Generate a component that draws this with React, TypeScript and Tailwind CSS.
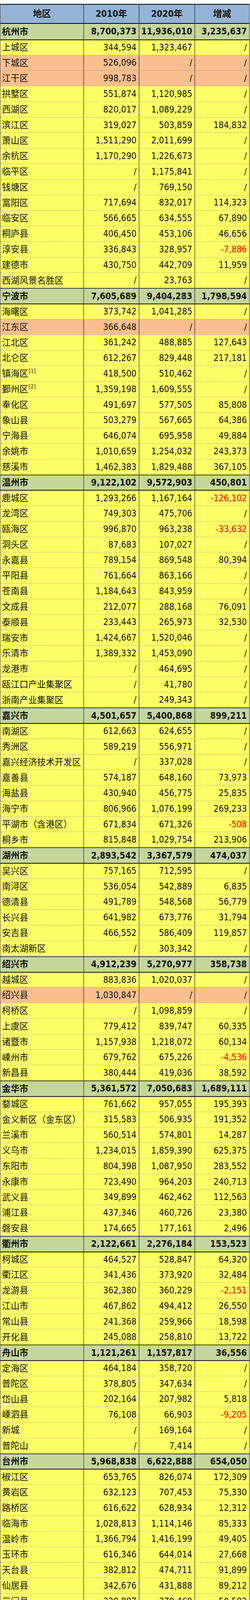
import React from "react";

type Kind = "c" | "n" | "o" | "t";
type Row = [string, Kind, string, string, string, string?];

const rows: Row[] = [
  ["杭州市", "c", "8,700,373", "11,936,010", "3,235,637"],
  ["上城区", "n", "344,594", "1,323,467", "/"],
  ["下城区", "o", "526,096", "/", "/"],
  ["江干区", "o", "998,783", "/", "/"],
  ["拱墅区", "n", "551,874", "1,120,985", "/"],
  ["西湖区", "n", "820,017", "1,089,229", "/"],
  ["滨江区", "n", "319,027", "503,859", "184,832"],
  ["萧山区", "n", "1,511,290", "2,011,699", "/"],
  ["余杭区", "n", "1,170,290", "1,226,673", "/"],
  ["临平区", "n", "/", "1,175,841", "/"],
  ["钱塘区", "n", "/", "769,150", "/"],
  ["富阳区", "n", "717,694", "832,017", "114,323"],
  ["临安区", "n", "566,665", "634,555", "67,890"],
  ["桐庐县", "n", "406,450", "453,106", "46,656"],
  ["淳安县", "n", "336,843", "328,957", "-7,886"],
  ["建德市", "n", "430,750", "442,709", "11,959"],
  ["西湖风景名胜区", "n", "/", "23,763", "/"],
  ["宁波市", "c", "7,605,689", "9,404,283", "1,798,594"],
  ["海曙区", "n", "373,742", "1,041,285", "/"],
  ["江东区", "o", "366,648", "/", "/"],
  ["江北区", "n", "361,242", "488,885", "127,643"],
  ["北仑区", "n", "612,267", "829,448", "217,181"],
  ["镇海区", "n", "418,500", "510,462", "/", "[1]"],
  ["鄞州区", "n", "1,359,198", "1,609,555", "/", "[2]"],
  ["奉化区", "n", "491,697", "577,505", "85,808"],
  ["象山县", "n", "503,279", "567,665", "64,386"],
  ["宁海县", "n", "646,074", "695,958", "49,884"],
  ["余姚市", "n", "1,010,659", "1,254,032", "243,373"],
  ["慈溪市", "n", "1,462,383", "1,829,488", "367,105"],
  ["温州市", "c", "9,122,102", "9,572,903", "450,801"],
  ["鹿城区", "n", "1,293,266", "1,167,164", "-126,102"],
  ["龙湾区", "n", "749,303", "475,706", "/"],
  ["瓯海区", "n", "996,870", "963,238", "-33,632"],
  ["洞头区", "n", "87,683", "107,027", "/"],
  ["永嘉县", "n", "789,154", "869,548", "80,394"],
  ["平阳县", "n", "761,664", "863,166", "/"],
  ["苍南县", "n", "1,184,643", "843,959", "/"],
  ["文成县", "n", "212,077", "288,168", "76,091"],
  ["泰顺县", "n", "233,443", "265,973", "32,530"],
  ["瑞安市", "n", "1,424,667", "1,520,046", "/"],
  ["乐清市", "n", "1,389,332", "1,453,090", "/"],
  ["龙港市", "n", "/", "464,695", "/"],
  ["瓯江口产业集聚区", "n", "/", "41,780", "/"],
  ["浙南产业集聚区", "n", "/", "249,343", "/"],
  ["嘉兴市", "c", "4,501,657", "5,400,868", "899,211"],
  ["南湖区", "n", "612,663", "624,655", "/"],
  ["秀洲区", "n", "589,219", "556,971", "/"],
  ["嘉兴经济技术开发区", "n", "/", "337,028", "/"],
  ["嘉善县", "n", "574,187", "648,160", "73,973"],
  ["海盐县", "n", "430,940", "456,775", "25,835"],
  ["海宁市", "n", "806,966", "1,076,199", "269,233"],
  ["平湖市（含港区）", "n", "671,834", "671,326", "-508"],
  ["桐乡市", "n", "815,848", "1,029,754", "213,906"],
  ["湖州市", "c", "2,893,542", "3,367,579", "474,037"],
  ["吴兴区", "n", "757,165", "712,595", "/"],
  ["南浔区", "n", "536,054", "542,889", "6,835"],
  ["德清县", "n", "491,789", "548,568", "56,779"],
  ["长兴县", "n", "641,982", "673,776", "31,794"],
  ["安吉县", "n", "466,552", "586,409", "119,857"],
  ["南太湖新区", "n", "/", "303,342", "/"],
  ["绍兴市", "c", "4,912,239", "5,270,977", "358,738"],
  ["越城区", "n", "883,836", "1,020,037", "/"],
  ["绍兴县", "o", "1,030,847", "/", "/"],
  ["柯桥区", "n", "/", "1,098,859", "/"],
  ["上虞区", "n", "779,412", "839,747", "60,335"],
  ["诸暨市", "n", "1,157,938", "1,218,072", "60,134"],
  ["嵊州市", "n", "679,762", "675,226", "-4,536"],
  ["新昌县", "n", "380,444", "419,036", "38,592"],
  ["金华市", "c", "5,361,572", "7,050,683", "1,689,111"],
  ["婺城区", "n", "761,662", "957,055", "195,393"],
  ["金义新区（金东区）", "n", "315,583", "506,935", "191,352"],
  ["兰溪市", "n", "560,514", "574,801", "14,287"],
  ["义乌市", "n", "1,234,015", "1,859,390", "625,375"],
  ["东阳市", "n", "804,398", "1,087,950", "283,552"],
  ["永康市", "n", "723,490", "964,203", "240,713"],
  ["武义县", "n", "349,899", "462,462", "112,563"],
  ["浦江县", "n", "437,346", "460,726", "23,380"],
  ["磐安县", "n", "174,665", "177,161", "2,496"],
  ["衢州市", "c", "2,122,661", "2,276,184", "153,523"],
  ["柯城区", "n", "464,527", "528,847", "64,320"],
  ["衢江区", "n", "341,436", "373,920", "32,484"],
  ["龙游县", "n", "362,380", "360,229", "-2,151"],
  ["江山市", "n", "467,862", "494,412", "26,550"],
  ["常山县", "n", "241,368", "259,966", "18,598"],
  ["开化县", "n", "245,088", "258,810", "13,722"],
  ["舟山市", "c", "1,121,261", "1,157,817", "36,556"],
  ["定海区", "n", "464,184", "358,720", "/"],
  ["普陀区", "n", "378,805", "347,634", "/"],
  ["岱山县", "n", "202,164", "207,982", "5,818"],
  ["嵊泗县", "n", "76,108", "66,903", "-9,205"],
  ["新城", "n", "/", "169,164", "/"],
  ["普陀山", "n", "/", "7,414", "/"],
  ["台州市", "c", "5,968,838", "6,622,888", "654,050"],
  ["椒江区", "n", "653,765", "826,074", "172,309"],
  ["黄岩区", "n", "632,123", "707,453", "75,330"],
  ["路桥区", "n", "616,622", "628,934", "12,312"],
  ["临海市", "n", "1,028,813", "1,114,146", "85,333"],
  ["温岭市", "n", "1,366,794", "1,416,199", "49,405"],
  ["玉环市", "n", "616,346", "644,014", "27,668"],
  ["天台县", "n", "382,812", "474,711", "91,899"],
  ["仙居县", "n", "342,676", "431,888", "89,212"],
  ["三门县", "n", "328,887", "379,469", "50,582"],
  ["丽水市", "c", "2,116,957", "2,507,396", "/"],
  ["莲都区", "n", "451,418", "562,116", "110,698"],
  ["青田县", "n", "336,542", "509,053", "/", "[3]"],
  ["缙云县", "n", "358,917", "405,318", "46,401"],
  ["遂昌县", "n", "190,165", "194,385", "4,220"],
  ["松阳县", "n", "185,051", "204,880", "19,829"],
  ["云和县", "n", "111,591", "129,216", "17,625"],
  ["庆元县", "n", "141,541", "142,551", "1,010"],
  ["景宁畲族自治县", "n", "107,106", "111,011", "3,905"],
  ["龙泉市", "n", "234,626", "248,866", "14,240"],
  ["浙江省", "t", "54,426,891", "64,567,588", "10,140,697"],
];

const FONT =
  "[font-family:'DejaVu_Sans_Condensed','Liberation_Sans','Noto_Sans_CJK_SC',sans-serif]";

const bgFor: Record<Kind, string> = {
  c: "bg-[#c4d79b] font-bold",
  n: "bg-[#ffff66]",
  o: "bg-[#fabf8f]",
  t: "bg-[#95b3d7] font-bold border-b-2 border-b-black",
};

function topBorder(kind: Kind, prev: Kind | null): string {
  if (prev === null) return "";
  if (kind === "t") return "border-t-[3px] border-t-black";
  if (kind === "c") return "border-t-2 border-t-[#3a3a3a]";
  if (prev === "c") return "border-t-2 border-t-[#111111]";
  return "border-t border-dotted border-t-[#8a8a8a]";
}

function NumCell({ v }: { v: string }) {
  const neg = v.startsWith("-");
  return (
    <div
      className={`flex items-center justify-end pr-[6px] border-l border-l-black text-[23px] leading-none overflow-hidden ${
        neg ? "text-[#ff0000]" : "text-[#111111]"
      }`}
    >
      {v}
    </div>
  );
}

const NOTES = [
  { text: "注： / 因行政区划调整、统计口径不同等因素，无数据或数据不可比。", indent: "pl-[4px]" },
  { text: "[1] 镇海区2020年数据不含贵驷街道。", indent: "pl-[33px]" },
  { text: "[2] 鄞州区2020年数据包含高新区全区，含贵驷街道。", indent: "pl-[33px]" },
  { text: "[3] 青田县2020年常住人口包括146108人华侨人口。", indent: "pl-[33px]" },
];

export default function App() {
  return (
    <div className={`w-[641px] h-[4694px] overflow-hidden bg-white pt-[10px] leading-none ${FONT}`}>
      <div className="w-[640px] border-l border-r border-l-[#444444] border-r-[#222222]">
        <div className="grid grid-cols-[213px_142px_143px_140px] h-[51px] overflow-hidden bg-[#95b3d7] border-t-2 border-b-2 border-black font-bold text-[23px] leading-none text-[#111111]">
          <div className="flex items-center justify-center">地区</div>
          <div className="flex items-center justify-center border-l border-l-black">2010年</div>
          <div className="flex items-center justify-center border-l border-l-black">2020年</div>
          <div className="flex items-center justify-center border-l border-l-black">增减</div>
        </div>
        <div className="grid grid-rows-[repeat(113,minmax(0,1fr))] h-[4495px] overflow-hidden">
          {rows.map((r, i) => {
            const [name, kind, a, b, c, sup] = r;
            const prev = i === 0 ? null : rows[i - 1][1];
            return (
              <div
                key={name}
                className={`grid grid-cols-[213px_142px_143px_140px] min-h-0 overflow-hidden ${bgFor[kind]} ${topBorder(
                  kind,
                  prev
                )}`}
              >
                <div className="flex items-center pl-[4px] text-[22.5px] leading-none text-[#111111] whitespace-nowrap overflow-hidden">
                  <span>{name}</span>
                  {sup && (
                    <span className="self-start mt-[5px] ml-[1px] text-[14px] leading-none text-[#222222]">
                      {sup}
                    </span>
                  )}
                </div>
                <NumCell v={a} />
                <NumCell v={b} />
                <NumCell v={c} />
              </div>
            );
          })}
        </div>
      </div>
      <div className="[font-family:'Noto_Sans_CJK_SC','Liberation_Sans',sans-serif] text-[20px] text-[#333333] pt-[2px] h-[138px] overflow-hidden">
        {NOTES.map((n) => (
          <div key={n.text} className={`flex items-center h-[34px] leading-none whitespace-nowrap ${n.indent}`}>
            {n.text}
          </div>
        ))}
      </div>
    </div>
  );
}
